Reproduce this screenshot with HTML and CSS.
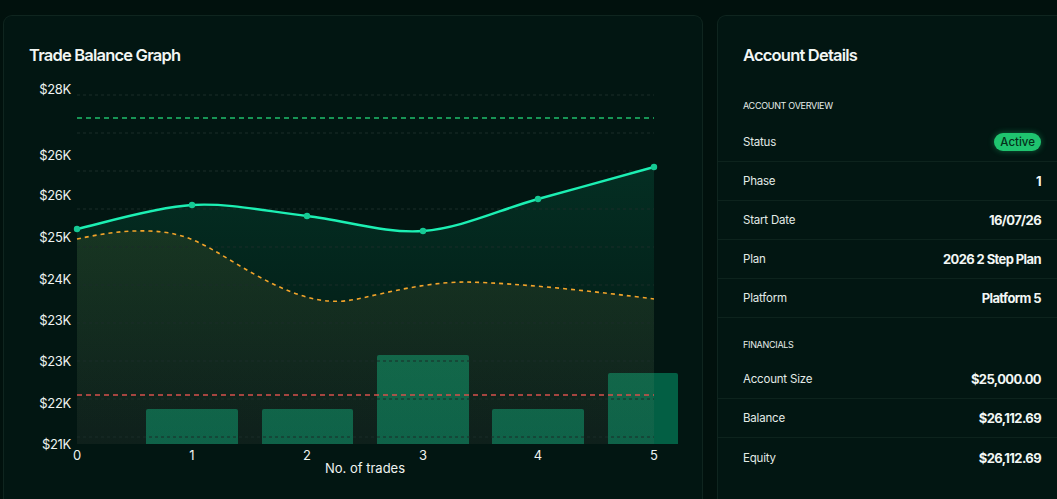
FILE: index.html
```html
<!DOCTYPE html>
<html>
<head>
    <title>Account Dashboard</title>
    <link rel="stylesheet" href="styles.css">
</head>
<body>
    <div class="page">
        <div class="card chart-card">
            <div class="card-head">
                <h2>Trade Balance Graph</h2>
            </div>
            <svg class="chart" width="698" height="403" viewBox="4 80 698 403">
                <defs>
                    <linearGradient id="greenFill" x1="0" y1="0" x2="0" y2="1">
                        <stop offset="0" stop-color="#0fb981" stop-opacity="0.15"/>
                        <stop offset="1" stop-color="#0fb981" stop-opacity="0"/>
                    </linearGradient>
                    <linearGradient id="orangeFill" x1="0" y1="0" x2="0" y2="1">
                        <stop offset="0" stop-color="#b89a3a" stop-opacity="0.11"/>
                        <stop offset="1" stop-color="#8c8478" stop-opacity="0.09"/>
                    </linearGradient>
                </defs>

                <!-- bars -->
                <g class="bars">
                    <path d="M146,444 V411 Q146,409 148,409 H236 Q238,409 238,411 V444 Z"/>
                    <path d="M262,444 V411 Q262,409 264,409 H351 Q353,409 353,411 V444 Z"/>
                    <path d="M377,444 V357 Q377,355 379,355 H467 Q469,355 469,357 V444 Z"/>
                    <path d="M492,444 V411 Q492,409 494,409 H582 Q584,409 584,411 V444 Z"/>
                    <path d="M608,444 V375 Q608,373 610,373 H676 Q678,373 678,375 V444 Z"/>
                </g>

                <!-- areas -->
                <path fill="url(#greenFill)" d="M77,229 C96.2,225 153.7,207.2 192,205 C230.3,202.8 268.5,211.7 307,216 C345.5,220.3 384.5,233.8 423,231 C461.5,228.2 499.5,209.7 538,199 C576.5,188.3 634.7,172.3 654,167 V444 H77 Z"/>
                <path fill="url(#orangeFill)" d="M77,239 C100,234 125,230 150,231 C185,232 205,245 230,260 C260,278 290,295 320,300 C345,304 360,298 380,294 C410,287 440,282 465,282 C520,283 600,292 654,299 V444 H77 Z"/>

                <!-- grid -->
                <g class="grid">
                    <line x1="77" y1="95" x2="654" y2="95"/>
                    <line x1="77" y1="133" x2="654" y2="133"/>
                    <line x1="77" y1="171" x2="654" y2="171"/>
                    <line x1="77" y1="209" x2="654" y2="209"/>
                    <line x1="77" y1="247" x2="654" y2="247"/>
                    <line x1="77" y1="285" x2="654" y2="285"/>
                    <line x1="77" y1="323" x2="654" y2="323"/>
                    <line x1="77" y1="361" x2="654" y2="361"/>
                    <line x1="77" y1="399" x2="654" y2="399"/>
                    <line x1="77" y1="437" x2="654" y2="437"/>
                </g>

                <!-- target / limit lines -->
                <line class="target" x1="77" y1="118" x2="654" y2="118"/>
                <line class="limit" x1="77" y1="395" x2="654" y2="395"/>

                <!-- equity (orange) and balance (green) -->
                <path class="equity" d="M77,239 C100,234 125,230 150,231 C185,232 205,245 230,260 C260,278 290,295 320,300 C345,304 360,298 380,294 C410,287 440,282 465,282 C520,283 600,292 654,299"/>
                <path class="balance" d="M77,229 C96.2,225 153.7,207.2 192,205 C230.3,202.8 268.5,211.7 307,216 C345.5,220.3 384.5,233.8 423,231 C461.5,228.2 499.5,209.7 538,199 C576.5,188.3 634.7,172.3 654,167"/>
                <g class="dots">
                    <circle cx="77" cy="229" r="3.2"/>
                    <circle cx="192" cy="205" r="3.2"/>
                    <circle cx="307" cy="216" r="3.2"/>
                    <circle cx="423" cy="231" r="3.2"/>
                    <circle cx="538" cy="199" r="3.2"/>
                    <circle cx="654" cy="167" r="3.2"/>
                </g>

                <!-- y axis -->
                <g class="y-labels">
                    <text x="71" y="94">$28K</text>
                    <text x="71" y="160">$26K</text>
                    <text x="71" y="200">$26K</text>
                    <text x="71" y="242">$25K</text>
                    <text x="71" y="284">$24K</text>
                    <text x="71" y="325">$23K</text>
                    <text x="71" y="366">$23K</text>
                    <text x="71" y="408">$22K</text>
                    <text x="71" y="449">$21K</text>
                </g>

                <!-- x axis -->
                <g class="x-labels">
                    <text x="77" y="460">0</text>
                    <text x="192" y="460">1</text>
                    <text x="307" y="460">2</text>
                    <text x="423" y="460">3</text>
                    <text x="538" y="460">4</text>
                    <text x="654" y="460">5</text>
                    <text class="x-title" x="365" y="473">No. of trades</text>
                </g>
            </svg>
        </div>

        <div class="card details-card">
            <div class="card-head">
                <h2>Account Details</h2>
            </div>

            <div class="section-label first">Account Overview</div>
            <div class="row">
                <span class="label">Status</span>
                <span class="badge">Active</span>
            </div>
            <div class="row">
                <span class="label">Phase</span>
                <span class="value">1</span>
            </div>
            <div class="row">
                <span class="label">Start Date</span>
                <span class="value">16/07/26</span>
            </div>
            <div class="row">
                <span class="label">Plan</span>
                <span class="value">2026 2 Step Plan</span>
            </div>
            <div class="row">
                <span class="label">Platform</span>
                <span class="value">Platform 5</span>
            </div>

            <div class="section-label">Financials</div>
            <div class="row">
                <span class="label">Account Size</span>
                <span class="value">$25,000.00</span>
            </div>
            <div class="row">
                <span class="label">Balance</span>
                <span class="value">$26,112.69</span>
            </div>
            <div class="row last">
                <span class="label">Equity</span>
                <span class="value">$26,112.69</span>
            </div>
        </div>
    </div>
</body>
</html>
```

FILE: styles.css
```css
html, body {
    height: 499px;
    overflow: hidden;
}

body {
    font-family: Inter, "Noto Sans", sans-serif;
    background-color: #01110d;
    color: #e9f1ed;
    margin: 0;
    padding: 0;
}

.page {
    display: flex;
    gap: 14px;
    height: 484px;
    padding: 15px 0 0 3px;
}

/* cards run on past the bottom and right edge of the view */
.card {
    background-color: #021612;
    border: 1px solid #0f251f;
    border-bottom: none;
    border-radius: 9px 9px 0 0;
    flex-shrink: 0;
}

.chart-card {
    width: 698px;
}

.details-card {
    flex: 1;
    border-right: none;
    border-top-right-radius: 0;
}

.card-head {
    height: 50px;
    padding: 14px 25px 0;
    display: flex;
    align-items: center;
}

h2 {
    margin: 0;
    font-size: 16.5px;
    font-weight: 600;
    letter-spacing: -0.8px;
    color: #f2f6f4;
}

.chart {
    display: block;
}

.bars path {
    fill: #036649;
    fill-opacity: 0.92;
}

.grid line {
    stroke: #1b2d28;
    stroke-width: 1;
    stroke-dasharray: 3 3;
}

.target {
    stroke: #1fbf6c;
    stroke-width: 1.6;
    stroke-dasharray: 5 4;
}

.limit {
    stroke: #d6504c;
    stroke-width: 1.6;
    stroke-dasharray: 5 4;
}

.equity {
    fill: none;
    stroke: #f3a42a;
    stroke-width: 1.6;
    stroke-dasharray: 4 4;
}

.balance {
    fill: none;
    stroke: #1cefb3;
    stroke-width: 2.4;
}

.dots circle {
    fill: #16c994;
}

.y-labels text {
    font-size: 13px;
    letter-spacing: -0.3px;
    fill: #eef3f1;
    text-anchor: end;
}

.x-labels text {
    font-size: 13px;
    fill: #eef3f1;
    text-anchor: middle;
}

.section-label {
    font-size: 9px;
    letter-spacing: -0.3px;
    text-transform: uppercase;
    color: #e6eeea;
    padding: 20px 25px 8px;
    line-height: 14px;
}

.section-label.first {
    padding-top: 19px;
    padding-bottom: 10px;
}

.row {
    display: flex;
    justify-content: space-between;
    align-items: center;
    height: 38px;
    padding: 0 16px 0 25px;
    border-bottom: 1px solid #0d231d;
}

.row.last {
    height: 40px;
    border-bottom: none;
}

.label {
    font-size: 11.5px;
    letter-spacing: -0.2px;
    color: #e3ebe7;
}

.value {
    font-size: 13px;
    font-weight: 700;
    letter-spacing: -0.6px;
    color: #f2f6f4;
}

.badge {
    background-color: #1fc46f;
    color: #05301a;
    font-size: 11.5px;
    font-weight: 500;
    padding: 2px 6px;
    border-radius: 10px;
    box-shadow: 0 0 6px rgba(31, 196, 111, 0.45);
}
```
